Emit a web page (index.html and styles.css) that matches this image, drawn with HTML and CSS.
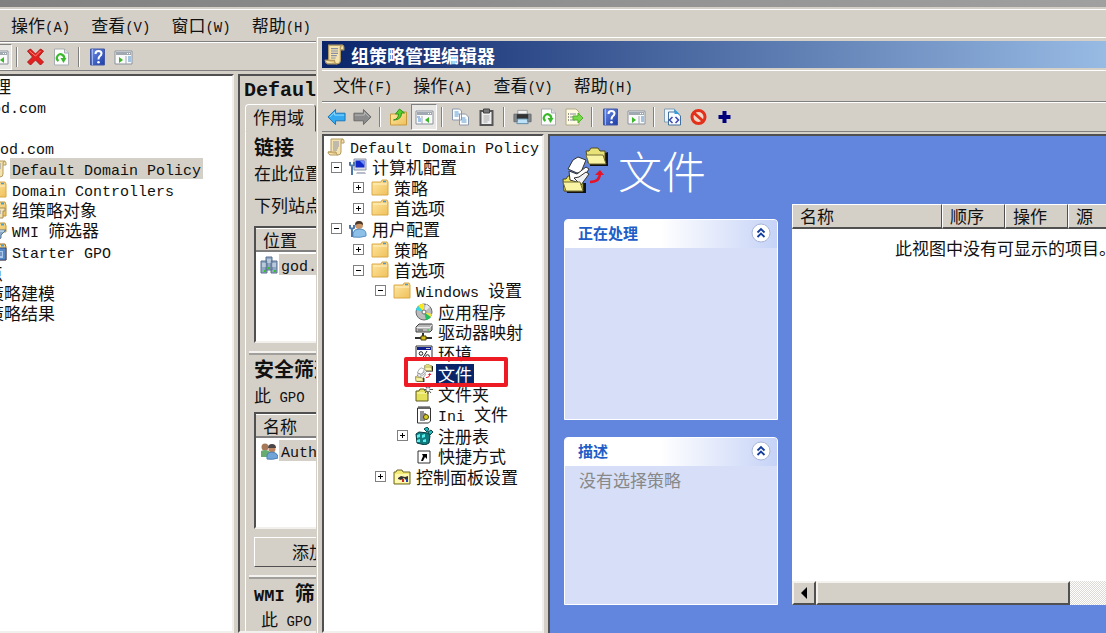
FILE: index.html
```html
<!DOCTYPE html>
<html lang="zh-CN">
<head>
<meta charset="utf-8">
<title>组策略管理编辑器</title>
<link rel="stylesheet" href="styles.css">
</head>
<body>
<svg class="defs" aria-hidden="true">
  <defs>
    <linearGradient id="gold" x1="0" y1="0" x2="1" y2="1"><stop offset="0" stop-color="#ffe8a4"/><stop offset="1" stop-color="#efc05a"/></linearGradient>
    <linearGradient id="blue" x1="0" y1="0" x2="1" y2="1"><stop offset="0" stop-color="#7090e8"/><stop offset="1" stop-color="#1c3ca8"/></linearGradient>
  </defs>
  <symbol id="scroll" viewBox="0 0 18 18"><path d="M4 1h11q2 0 2 2v2h-3v9q0 3-3 3H3q-2-1-2-3h3z" fill="#f5e3ae" stroke="#b49a60"/><path d="M14 5V3q0-2 2-2M1 14h8q0 3 2 3" fill="#dfc27c" stroke="#b49a60"/><path d="M6 4h6M6 6h6M6 8h6M6 10h5M6 12h4" stroke="#8890a8"/></symbol>
  <symbol id="folder" viewBox="0 0 18 18"><path d="M1 3h9l1-2h5l1 2v13H1z" fill="url(#gold)" stroke="#d9a846"/><path d="M12 2.500h3" stroke="#4a9ad8" stroke-width="1.500"/><path d="M2 5h14" stroke="#fff1c4"/></symbol>
  <symbol id="computer" viewBox="0 0 18 18"><path d="M5 1h12v11H5z" fill="#d8dce8" stroke="#8c96a8"/><path d="M6.500 2.500h9v7h-9z" fill="#1028c8"/><path d="M11 3h4v4z" fill="#6c90f8"/><path d="M8 14h8l1 2H7z" fill="#b8bcc8"/><path d="M3 7v10M1 4v3l2 1 2-1V4" fill="none" stroke="#4c78a8" stroke-width="2"/></symbol>
  <symbol id="user" viewBox="0 0 18 18"><circle cx="10" cy="5" r="4" fill="#c89468"/><path d="M6 5q0-4 4-4t4 4q-3-2-5-1z" fill="#4c3828"/><path d="M4 17v-4q1-4 6-4 7 0 7 5v2q-5 2-13 1z" fill="#8cc0e8" stroke="#5890c0"/><path d="M3 8v9M1 5v3l2 1 2-1V5" fill="none" stroke="#4c78a8" stroke-width="2"/></symbol>
  <symbol id="disc" viewBox="0 0 18 18"><circle cx="9" cy="9" r="8" fill="#bcbcbc" stroke="#686868"/><path d="M9 9 3 3q3-3 6-2z" fill="#f8e820"/><path d="M9 9 1 7q0-2 2-4z" fill="#30d8e8"/><path d="m9 9 7 5q-2 3-5 3z" fill="#20c060"/><path d="m9 9 8 2-1 3z" fill="#f0e040"/><path d="m9 9 2-8 4 3z" fill="#e8e8e8"/><circle cx="9" cy="9" r="2" fill="#fff" stroke="#707070"/></symbol>
  <symbol id="drive" viewBox="0 0 18 18"><path d="m1 4 3-3h13v6l-2 2H1z" fill="#b8b8b8" stroke="#404040"/><path d="M1.500 4.500H15l2-3" fill="none" stroke="#eee"/><path d="M3 7h5" stroke="#505050"/><path d="M12 7h2" stroke="#20d020"/><path d="M8 10v4M0 15h17" stroke="#303030" stroke-width="2"/><path d="M6 13h5v4H6z" fill="#d8c020" stroke="#504800"/></symbol>
  <symbol id="env" viewBox="0 0 18 18"><path d="M1 2h16v14H1z" fill="#fff" stroke="#303030"/><path d="M2 3h14v3H2z" fill="#10208c"/><path d="M11 4.500h4" stroke="#d0d0d0"/><path d="m12 7-5 8" stroke="#222"/><circle cx="6" cy="9.500" r="1.800" fill="none" stroke="#222"/><circle cx="12.500" cy="12.500" r="1.800" fill="none" stroke="#222"/></symbol>
  <symbol id="files" viewBox="0 0 46 46"><path d="M27 6h16l3-1v14H28z" fill="#111"/><path d="M24 4h3l2-3h7l2 3h5v12H26z" fill="#e9e277" stroke="#514c1c"/><path d="m27 17-3-9h17l3 9z" fill="#f9f3a4" stroke="#736d34"/><path d="M3 36h21v10H5z" fill="#111"/><path d="M1 32h3l2-3h5l2 3h8v12H2z" fill="#f0e865" stroke="#4b4618"/><path d="m11 13 5-3 8 3-5 12-4 1-9-4z" fill="#fff" stroke="#333"/><path d="m7 24 8 3 9-7 3 2-9 14-10-3z" fill="#fff" stroke="#333"/><path d="m12 31 5-1 7-5 3 2-8 11z" fill="#f2f2f2" stroke="#333"/><path d="M4 44 1 35h17l3 9z" fill="#f9f3a4" stroke="#736d34"/><path d="M28 35q10 0 10-9" fill="none" stroke="#e51325" stroke-width="2.500"/><path d="m33 28 5-5 4 5z" fill="#e51325"/></symbol>
  <symbol id="newfolder" viewBox="0 0 18 18"><path d="M1 6h3l1-2h4l1 2h3v10H1z" fill="#e5e05a" stroke="#5e5a1e"/><path d="M2 8h10" stroke="#fffdc0"/><path d="M13 0v9M9 4.500h9M10 1l6 7M16 1l-6 7" stroke="#555"/><circle cx="13" cy="4.500" r="1.500" fill="#fff"/></symbol>
  <symbol id="ini" viewBox="0 0 18 18"><path d="M2.500 2h13v13l-2 2h-11z" fill="#fff" stroke="#333"/><path d="M4 0v3M6 0v3M8 0v3M10 0v3M12 0v3M14 0v3" stroke="#333"/><path d="M5 6h4M5 8h6M5 10h4M5 12h4M5 14h5" stroke="#222"/><circle cx="11" cy="11" r="2.500" fill="#d8ce20" stroke="#4d4908"/></symbol>
  <symbol id="registry" viewBox="0 0 18 18"><path d="m1 7 3-2 9 1 2 3-1 7-4 2-8-2z" fill="#107c80" stroke="#063b40"/><path d="m2 8 3-1v3l-3 1zM7 8l3-1v3l-3 1zM2 13l3-1v3H2zM8 13l3-1v3H8z" fill="#5af0ef"/><path d="m9 2 3-2 2 2-2 3zM13 5l3-2 2 2-3 3z" fill="#20b8bc" stroke="#06474a"/></symbol>
  <symbol id="shortcut" viewBox="0 0 18 18"><path d="M3 4h12v12H3z" fill="#fff" stroke="#333"/><path d="M7 7h5v5l-2-2-2 4H6l2-5z" fill="#000"/></symbol>
  <symbol id="control" viewBox="0 0 18 18"><path d="M1 4h2l1-2h5l1 2h7v12H1z" fill="#f3eb74" stroke="#6c6727"/><path d="M2 6h14v9H2z" fill="#fff8b0"/><path d="m5 10 3-2 4 1 3-1v4h-2l-2-2-3 2-3-1z" fill="#333"/><path d="M9 11h2v3H9z" fill="#d22"/><path d="M13 11h2v3h-2z" fill="#24b"/></symbol>
  <symbol id="delete" viewBox="0 0 18 18"><path d="m1 3 3-2 5 5 5-5 3 2-5 6 5 5-3 3-5-5-5 5-3-3 5-5z" fill="#e32020" stroke="#b11a1a"/><path d="m3 3 6 5 5-5" fill="none" stroke="#ff8a7a"/></symbol>
  <symbol id="refresh" viewBox="0 0 18 18"><path d="M2 1h10l4 4v12H2z" fill="#fcfcfc" stroke="#a9adb1"/><path d="M12 1v4h4" fill="#dce0e3" stroke="#a9adb1"/><path d="M6 13q-3-2-1-5 2-3 5-1 3 2 1 5" fill="none" stroke="#39b82c" stroke-width="2.200"/><path d="M8 10h6l-3 5z" fill="#39b82c"/></symbol>
  <symbol id="help" viewBox="0 0 18 18"><path d="M2 1h14v16H2z" fill="url(#blue)" stroke="#4459a2"/><path d="M4 1v16" stroke="#9ab4f4"/><path d="M7 6q0-3 3-3t3 2.500Q13 7 11 8.500q-1 1-1 3" fill="none" stroke="#fff" stroke-width="2"/><circle cx="10" cy="14.300" r="1.300" fill="#fff"/></symbol>
  <symbol id="panel" viewBox="0 0 19 18"><path d="M1 3h17v13H1z" fill="#fafafa" stroke="#8a929c"/><path d="M2 4h15v3H2z" fill="#a0a8b2"/><path d="M13 5.500h1M15 5.500h1" stroke="#fff"/><path d="M12 8v8" stroke="#a0a8b2"/><path d="m5 9 4 3-4 3z" fill="#3cb52a"/><path d="M14 9h3M14 11h3M14 13h3" stroke="#4b8ac8"/></symbol>
  <symbol id="tree" viewBox="0 0 19 18"><path d="M1 3h17v13H1z" fill="#fafafa" stroke="#8a929c"/><path d="M2 4h15v3H2z" fill="#a0a8b2"/><path d="M13 5.500h1M15 5.500h1" stroke="#fff"/><path d="M7 8v8" stroke="#a0a8b2"/><path d="m14 9-4 3 4 3z" fill="#3cb52a"/><path d="M2 9h3M3 11h3M3 13h3" stroke="#4b8ac8"/></symbol>
  <symbol id="back" viewBox="0 0 20 18"><path d="m1 9 8-8v4h10v8H9v4z" fill="#35a9ef" stroke="#1876bc"/><path d="m3 9 5-5v3h10" fill="none" stroke="#93ddff"/></symbol>
  <symbol id="forward" viewBox="0 0 20 18"><path d="m19 9-8-8v4H1v8h10v4z" fill="#8b8b8b" stroke="#696969"/><path d="M2 7h10V4l5 5" fill="none" stroke="#bababa"/></symbol>
  <symbol id="up" viewBox="0 0 18 18"><path d="M1 6h6l2-2h8v13H1z" fill="url(#gold)" stroke="#c79a3c"/><path d="M4 12q5-1 5-6H6l4-5 5 4h-3q0 7-8 7" fill="#55cf2c" stroke="#32941c"/></symbol>
  <symbol id="copy" viewBox="0 0 18 18"><path d="M1 1h7l2 2v9H1zM8 6h6l3 3v8H8z" fill="#fff" stroke="#8b98ac"/><path d="M3 4h4M3 6h5M3 8h4M10 10h4M10 12h5M10 14h5" stroke="#5598d0"/></symbol>
  <symbol id="paste" viewBox="0 0 18 18"><path d="M3 3h12v14H3z" fill="#eee" stroke="#555" stroke-width="2"/><path d="M6 1h6v4H6z" fill="#777" stroke="#444"/><path d="M6 8h6M6 10h6M6 12h6M6 14h4" stroke="#aaa"/></symbol>
  <symbol id="print" viewBox="0 0 20 18"><path d="M5 2h10v5H5z" fill="#f3f3f3" stroke="#999"/><path d="M1 6h18v8H1z" fill="#80868b" stroke="#686c70"/><path d="M4 6h12v5H4z" fill="#333"/><path d="m5 11-1 5h12l-1-5z" fill="#bde2f8" stroke="#5d88a1"/></symbol>
  <symbol id="export" viewBox="0 0 19 18"><path d="M1 1h10l3 3v13H1z" fill="#fffbe2" stroke="#b1aa86"/><path d="M3 6h1M3 9h1M3 12h1" stroke="#333"/><path d="M5 6h6M5 9h5M5 12h5" stroke="#8a87a0"/><path d="M8 8h5V5l5 5-5 5v-3H8z" fill="#77da4b" stroke="#4fae2c"/></symbol>
  <symbol id="xml" viewBox="0 0 18 18"><path d="M1 1h10v13H1z" fill="#eef6fc" stroke="#849eb3"/><path d="M5 4h8l4 4v9H5z" fill="#f8fbff" stroke="#44719b"/><path d="m11 1 5 5h-5z" fill="#319ce0"/><path d="m9 9-3 3 3 3M12 9l3 3-3 3" fill="none" stroke="#3c45b5" stroke-width="1.500"/></symbol>
  <symbol id="deny" viewBox="0 0 18 18"><circle cx="9" cy="9" r="6.500" fill="#f2d8c8" stroke="#e2301b" stroke-width="3"/><path d="m4.500 5 9 8" stroke="#e2301b" stroke-width="3"/></symbol>
  <symbol id="plus" viewBox="0 0 18 18"><path d="M9 3v12M3 9h12" stroke="#00007c" stroke-width="4"/></symbol>
  <symbol id="servers" viewBox="0 0 18 18"><path d="M6 1h6v13H6zM1 5h6v12H1zM11 5h6v12h-6z" fill="#8fa7c3" stroke="#58708f"/><path d="M7 4h4M7 6h4M2 8h4M2 10h4M12 8h4M12 10h4" stroke="#dfebf5"/><path d="M4 15h2M8 12h2M14 15h2" stroke="#32c52a" stroke-width="2"/></symbol>
  <symbol id="group" viewBox="0 0 18 18"><circle cx="5" cy="5" r="3.500" fill="#a67858"/><path d="M1 15V9q4-2 8 0v6z" fill="#68ab70"/><circle cx="12" cy="7" r="3.500" fill="#bf8460"/><path d="M8 6q0-4 4-4t4 4z" fill="#4b4548"/><path d="M7 17v-4q1-3 5-3t6 4v2q-5 2-11 1z" fill="#70a4d9" stroke="#4c7eb1"/></symbol>
  <symbol id="gpos" viewBox="0 0 18 18"><path d="M1 3h9l1-2h5l1 3v11H1z" fill="url(#gold)" stroke="#c69739"/><path d="M12 2.500h3" stroke="#39a0e8" stroke-width="2"/><path d="M4 7h12v3h-2v7H4z" fill="#f5e4b4" stroke="#a48b58"/><path d="M6 10h6M6 12h6M6 14h5" stroke="#8890a8"/></symbol>
  <symbol id="wmi" viewBox="0 0 18 18"><path d="M1 3h9l1-2h5l1 3v6H1z" fill="url(#gold)" stroke="#c69739"/><path d="M12 2.500h3" stroke="#39a0e8" stroke-width="2"/><path d="M3 8h14l-5 5v3l-3 2v-5z" fill="#8ba9c5" stroke="#587a99"/><path d="M5 9h10" stroke="#e3f1fc"/></symbol>
  <symbol id="starter" viewBox="0 0 18 18"><path d="M1 3h9l1-2h5l1 3v13H1z" fill="url(#gold)" stroke="#a8681e"/><path d="M12 2.500h3" stroke="#39a0e8" stroke-width="2"/><path d="M5 5h12v12H5z" fill="#5688c8" stroke="#314f85"/><path d="M8 8h6v7H8z" fill="#aac9ec"/><path d="M9 10h4M9 12h4" stroke="#3c5f96"/></symbol>
  <symbol id="chevrons" viewBox="0 0 20 20"><circle cx="10" cy="10" r="9" fill="#fff" stroke="#a9b6d8"/><path d="m6.500 9.500 3.500-3.500 3.500 3.500M6.500 14l3.500-3.500 3.500 3.500" fill="none" stroke="#143c9c" stroke-width="1.800"/></symbol>
</svg>

<main class="desktop">
  <section class="window console">
    <header class="caption caption-inactive"></header>
    <nav class="menubar">
      <button>操作<span class="key">(A)</span></button><button>查看<span class="key">(V)</span></button><button>窗口<span class="key">(W)</span></button><button>帮助<span class="key">(H)</span></button>
    </nav>
    <div class="toolbar">
      <button class="pressed" aria-label="控制台树"><svg><use href="#tree"/></svg></button><i class="sep"></i>
      <button aria-label="删除"><svg><use href="#delete"/></svg></button><button aria-label="刷新"><svg><use href="#refresh"/></svg></button><i class="sep"></i>
      <button aria-label="帮助"><svg><use href="#help"/></svg></button><button aria-label="操作窗格"><svg><use href="#panel"/></svg></button>
    </div>
    <div class="console-body">
      <div class="sunken console-tree-box">
        <ul class="console-tree">
          <li class="c-root">理</li>
          <li class="c-forest"><span><span class="latin">od.com</span></span></li>
          <li></li>
          <li class="c-domain"><span><span class="latin">od.com</span></span></li>
          <li class="c-item"><svg class="icon"><use href="#scroll"/></svg><span class="current"><span class="latin">Default Domain Policy</span></span></li>
          <li class="c-item"><svg class="icon"><use href="#folder"/></svg><span><span class="latin">Domain Controllers</span></span></li>
          <li class="c-item"><svg class="icon"><use href="#gpos"/></svg><span>组策略对象</span></li>
          <li class="c-item"><svg class="icon"><use href="#wmi"/></svg><span><span class="latin">WMI </span>筛选器</span></li>
          <li class="c-item"><svg class="icon"><use href="#starter"/></svg><span><span class="latin">Starter GPO</span></span></li>
          <li class="c-site">点</li>
          <li class="c-model">策略建模</li>
          <li class="c-model">策略结果</li>
        </ul>
      </div>
      <div class="sunken gpo">
        <h1>Defaul</h1>
        <div class="tabs"><button class="tab">作用域</button></div>
        <div class="scope">
          <section class="scope-links">
            <h2>链接</h2>
            <p>在此位置</p>
            <p class="note">下列站点</p>
            <div class="sunken listbox"><div class="colhead">位置</div><div class="entry"><svg class="icon"><use href="#servers"/></svg><span class="current"><span class="latin">god.</span></span></div></div>
          </section>
          <section class="scope-security">
            <h2>安全筛选</h2>
            <p>此<span class="key"> GPO</span></p>
            <div class="sunken listbox"><div class="colhead">名称</div><div class="entry"><svg class="icon"><use href="#group"/></svg><span class="current"><span class="latin">Auth</span></span></div></div>
            <button class="push">添加</button>
          </section>
          <section class="scope-wmi">
            <h2><span class="bold-latin">WMI </span>筛</h2>
            <p>此<span class="key"> GPO</span></p>
          </section>
        </div>
      </div>
    </div>
  </section>

  <section class="window editor">
    <header class="caption"><svg class="caption-icon"><use href="#scroll"/></svg><span>组策略管理编辑器</span></header>
    <nav class="menubar">
      <button>文件<span class="key">(F)</span></button><button>操作<span class="key">(A)</span></button><button>查看<span class="key">(V)</span></button><button>帮助<span class="key">(H)</span></button>
    </nav>
    <div class="toolbar">
      <button aria-label="后退"><svg><use href="#back"/></svg></button><button aria-label="前进"><svg><use href="#forward"/></svg></button><i class="sep"></i>
      <button aria-label="向上"><svg><use href="#up"/></svg></button><button class="pressed" aria-label="控制台树"><svg><use href="#tree"/></svg></button><i class="sep"></i>
      <button aria-label="复制"><svg><use href="#copy"/></svg></button><button aria-label="粘贴"><svg><use href="#paste"/></svg></button><i class="sep"></i>
      <button aria-label="打印"><svg><use href="#print"/></svg></button><button aria-label="刷新"><svg><use href="#refresh"/></svg></button><button aria-label="导出列表"><svg><use href="#export"/></svg></button><i class="sep"></i>
      <button aria-label="帮助"><svg><use href="#help"/></svg></button><button aria-label="操作窗格"><svg><use href="#panel"/></svg></button><i class="sep"></i>
      <button aria-label="显示 XML"><svg><use href="#xml"/></svg></button><button aria-label="禁用"><svg><use href="#deny"/></svg></button><button aria-label="添加"><svg><use href="#plus"/></svg></button>
    </div>
    <div class="editor-body">
      <div class="sunken tree-box">
        <ul class="tree">
          <li class="root"><svg class="icon"><use href="#scroll"/></svg><span><span class="latin">Default Domain Policy</span></span></li>
          <li class="l1"><button class="toggle open" aria-label="折叠"></button><svg class="icon"><use href="#computer"/></svg><span>计算机配置</span></li>
          <li class="l2"><button class="toggle" aria-label="展开"></button><svg class="icon"><use href="#folder"/></svg><span>策略</span></li>
          <li class="l2"><button class="toggle" aria-label="展开"></button><svg class="icon"><use href="#folder"/></svg><span>首选项</span></li>
          <li class="l1"><button class="toggle open" aria-label="折叠"></button><svg class="icon"><use href="#user"/></svg><span>用户配置</span></li>
          <li class="l2"><button class="toggle" aria-label="展开"></button><svg class="icon"><use href="#folder"/></svg><span>策略</span></li>
          <li class="l2"><button class="toggle open" aria-label="折叠"></button><svg class="icon"><use href="#folder"/></svg><span>首选项</span></li>
          <li class="l3"><button class="toggle open" aria-label="折叠"></button><svg class="icon"><use href="#folder"/></svg><span><span class="latin">Windows </span>设置</span></li>
          <li class="leaf"><svg class="icon"><use href="#disc"/></svg><span>应用程序</span></li>
          <li class="leaf"><svg class="icon"><use href="#drive"/></svg><span>驱动器映射</span></li>
          <li class="leaf"><svg class="icon"><use href="#env"/></svg><span>环境</span></li>
          <li class="leaf marked"><svg class="icon"><use href="#files"/></svg><span class="selected">文件</span></li>
          <li class="leaf"><svg class="icon"><use href="#newfolder"/></svg><span>文件夹</span></li>
          <li class="leaf"><svg class="icon"><use href="#ini"/></svg><span><span class="latin">Ini </span>文件</span></li>
          <li class="l4"><button class="toggle" aria-label="展开"></button><svg class="icon"><use href="#registry"/></svg><span>注册表</span></li>
          <li class="leaf"><svg class="icon"><use href="#shortcut"/></svg><span>快捷方式</span></li>
          <li class="l3"><button class="toggle" aria-label="展开"></button><svg class="icon"><use href="#control"/></svg><span>控制面板设置</span></li>
        </ul>
      </div>
      <div class="sunken detail">
        <header class="detail-head"><svg class="detail-icon"><use href="#files"/></svg><h1>文件</h1></header>
        <div class="detail-body">
          <aside class="cards">
            <section class="card"><header><h2>正在处理</h2><button aria-label="收起"><svg><use href="#chevrons"/></svg></button></header></section>
            <section class="card"><header><h2>描述</h2><button aria-label="收起"><svg><use href="#chevrons"/></svg></button></header><p>没有选择策略</p></section>
          </aside>
          <div class="items">
            <table>
              <thead><tr><th class="w-name">名称</th><th class="w-order">顺序</th><th class="w-order">操作</th><th>源</th></tr></thead>
              <tbody><tr><td colspan="4">此视图中没有可显示的项目。</td></tr></tbody>
            </table>
            <div class="scrollbar"><button aria-label="向左滚动"><svg viewBox="0 0 8 12"><path d="M7 0v12L1 6z"/></svg></button><div class="thumb"></div></div>
          </div>
        </div>
      </div>
    </div>
  </section>
</main>
</body>
</html>
```

FILE: styles.css
```css
*, *::after { box-sizing: border-box; }

:root {
  --face: #d4d0c8;
  --shadow: #808080;
  --dark: #505050;
  --sky: #6285dd;
  --navy: #0a246a;
}

body {
  margin: 0;
  font: 17px/20px "Noto Sans CJK SC", sans-serif;
  color: #111;
}

h1, h2, p, ul { margin: 0; padding: 0; }
ul { list-style: none; }
button { font: inherit; color: inherit; background: none; border: 0; padding: 0; }
svg { display: block; flex: none; }
.defs { position: absolute; width: 0; height: 0; }

.desktop {
  position: relative;
  height: 100vh;
  overflow: hidden;
  background: var(--face);
}

.window {
  position: absolute;
  right: 0;
  bottom: 0;
  display: flex;
  flex-direction: column;
  background: var(--face);
  white-space: nowrap;
}
.console { left: -24px; top: 0; }
.editor {
  left: 316px;
  top: 37px;
  padding: 4px 0 0 5px;
  border-left: 1px solid var(--face);
  box-shadow: inset 1px 1px #fff;
}

.latin, .key {
  font-family: "Liberation Mono", "Noto Sans CJK SC", monospace;
  line-height: 1;
  white-space: pre;
}
.latin { font-size: 15px; }
.key { font-size: 14px; }
.icon { width: 18px; height: 18px; }

.caption {
  display: flex;
  align-items: center;
  gap: 6px;
  height: 27px;
  padding-left: 2px;
  background: linear-gradient(90deg, var(--navy), #a6caf0 110%);
  color: #fff;
  font-size: 18px;
  font-weight: 700;
}
.caption-inactive { height: 7px; background: linear-gradient(90deg, #808080, #a0a0a0); }
.caption-icon { width: 21px; height: 21px; }

.menubar {
  display: flex;
  gap: 1px;
  height: 32px;
  margin-top: 2px;
  padding: 0 0 2px 1px;
  border-top: 1px solid #fff;
  border-bottom: 1px solid var(--shadow);
}
.menubar button { padding: 0 10px; }
.console .menubar { padding-left: 25px; height: 33px; }

.toolbar {
  display: flex;
  align-items: center;
  height: 30px;
  padding-left: 1px;
  border-top: 1px solid #fff;
  border-bottom: 1px solid var(--shadow);
}
.toolbar button {
  display: grid;
  place-items: center;
  width: 26px;
  height: 26px;
}
.toolbar svg { width: 19px; height: 18px; }
.sep {
  width: 2px;
  height: 20px;
  margin: 0 4px;
  border-left: 1px solid var(--shadow);
  border-right: 1px solid #fff;
}
.toolbar .pressed {
  border: 1px solid;
  border-color: var(--shadow) #fff #fff var(--shadow);
  background: #e9e7e3;
}
.console .toolbar { padding-left: 10px; height: 29px; }

.sunken {
  border: 2px solid;
  border-color: var(--dark) #f2f0ec #f2f0ec var(--dark);
  overflow: hidden;
}

.console-body {
  display: grid;
  grid-template-columns: 258px 1fr;
  gap: 4px;
  flex: 1;
  min-height: 0;
  padding-top: 3px;
}
.console-tree-box, .tree-box { background: #fff; }
.console-tree {
  display: grid;
  grid-template-rows: repeat(12, 1fr);
  height: 247px;
}
.console-tree li { display: flex; align-items: center; gap: 5px; }
.console-tree .current { padding: 0 2px; margin-left: -2px; }
.c-root { padding-left: 16px; }
.c-forest { padding-left: 14px; }
.c-domain { padding-left: 22px; }
.c-item { padding-left: 11px; }
.c-site { padding-left: 8px; }
.c-model { padding-left: 9px; }
.current { background: var(--face); }

.gpo h1 {
  padding: 3px 0 1px 4px;
  font: 700 20px/24px "Liberation Mono", monospace;
}
.tabs { display: flex; padding-left: 5px; }
.tab {
  width: 71px;
  height: 28px;
  border: 1px solid;
  border-color: #fff var(--dark) transparent #fff;
  border-radius: 4px 4px 0 0;
  padding: 0 4px 2px 0;
}
.scope { margin-left: 5px; border-left: 1px solid #fff; }
.scope section { padding-left: 8px; }
.scope h2 { font-size: 20px; line-height: 28px; }
.bold-latin { font-family: "Liberation Mono", monospace; font-size: 17px; line-height: 1; white-space: pre; }
.scope p { line-height: 24px; }
.scope .note { margin-top: 8px; }
.listbox { height: 117px; background: #fff; }
.scope-links { padding-top: 1px; }
.scope-links .listbox { margin-top: 9px; }
.scope-security .listbox { margin-top: 5px; }
.colhead {
  height: 24px;
  padding-left: 7px;
  line-height: 22px;
  background: var(--face);
  border-top: 1px solid #fff;
  border-bottom: 2px solid var(--shadow);
}
.entry { display: flex; align-items: center; gap: 1px; padding: 2px 0 0 4px; }
.entry .current { padding-left: 2px; }
.scope-security, .scope-wmi {
  margin: 8px 0 0 3px;
  border-top: 4px ridge #f4f2ee;
}
.scope .scope-security, .scope .scope-wmi { padding-left: 5px; }
.scope-wmi p { padding-left: 7px; }
.push {
  display: block;
  width: 110px;
  height: 30px;
  margin-top: 8px;
  border: 1px solid;
  border-color: #fff var(--dark) var(--dark) #fff;
}

.editor-body {
  display: grid;
  grid-template-columns: 222px 1fr;
  gap: 4px;
  flex: 1;
  min-height: 0;
  padding-top: 2px;
}
.tree {
  display: grid;
  grid-template-rows: repeat(17, 1fr);
  height: 351px;
}
.tree li { display: flex; align-items: center; gap: 5px; }
.tree .root { padding-left: 3px; }
.tree .l1 { padding-left: 7px; }
.tree .l2 { padding-left: 29px; }
.tree .l3 { padding-left: 51px; }
.tree .l4 { padding-left: 73px; }
.tree .leaf { padding-left: 91px; }
.toggle {
  width: 11px;
  height: 11px;
  margin-right: 2px;
  border: 1px solid var(--shadow);
  background:
    linear-gradient(#000, #000) center / 5px 1px no-repeat,
    linear-gradient(#000, #000) center / 1px 5px no-repeat,
    #fff;
}
.toggle.open { background: linear-gradient(#000, #000) center / 5px 1px no-repeat, #fff; }
.selected {
  margin-left: -2px;
  padding: 0 2px;
  background: var(--navy);
  color: #fff;
  line-height: 19px;
}
.marked { position: relative; }
.marked::after {
  content: "";
  position: absolute;
  left: 80px;
  top: -6px;
  width: 104px;
  height: 30px;
  border: 4px solid #ed1c24;
  border-radius: 2px;
}

.detail {
  display: flex;
  flex-direction: column;
  border-right: 0;
  border-bottom: 0;
  background: var(--sky);
}
.detail-head {
  display: flex;
  align-items: flex-start;
  gap: 10px;
  height: 68px;
  padding: 11px 0 0 12px;
}
.detail-icon { width: 46px; height: 46px; }
.detail-head h1 {
  font-size: 44px;
  line-height: 46px;
  font-weight: 300;
  color: #fff;
}
.detail-body {
  display: grid;
  grid-template-columns: 214px 1fr;
  gap: 14px;
  flex: 1;
  padding: 0 0 28px 14px;
}
.cards {
  display: grid;
  grid-template-rows: 6fr 5fr;
  gap: 17px;
  padding-top: 15px;
}
.card {
  background: #d6dff7;
  border: 1px solid #fff;
  border-radius: 4px 4px 0 0;
}
.card header {
  display: flex;
  align-items: center;
  justify-content: space-between;
  height: 28px;
  padding: 0 6px 2px 13px;
  border-radius: 3px 3px 0 0;
  background: linear-gradient(90deg, #fff 45%, #c6d3f7);
}
.card h2 { font-size: 15px; color: #215dc6; }
.card svg { width: 20px; height: 20px; }
.card p { padding: 4px 14px; color: #888; }

.items {
  display: flex;
  flex-direction: column;
  min-width: 0;
  overflow: hidden;
  background: #fff;
}
table { width: 100%; table-layout: fixed; border-collapse: separate; border-spacing: 0; }
th {
  height: 25px;
  padding: 0 0 0 7px;
  text-align: left;
  font-weight: 400;
  background: var(--face);
  border: 1px solid;
  border-color: #fff var(--dark) var(--dark) #fff;
  border-bottom-width: 2px;
}
th:last-child { border-right: 0; }
.w-name { width: 150px; }
.w-order { width: 63px; }
td { padding: 9px 0 0 103px; }
.scrollbar {
  display: flex;
  height: 24px;
  margin-top: auto;
  background: repeating-conic-gradient(#fff 0 25%, #dcdad5 0 50%) 0 0 / 2px 2px;
}
.scrollbar button, .thumb {
  background: var(--face);
  border: 2px solid;
  border-color: #f4f2ee var(--dark) var(--dark) #f4f2ee;
}
.scrollbar button { display: grid; place-items: center; width: 24px; }
.scrollbar svg { width: 8px; height: 12px; }
.thumb { width: 81%; }
```
